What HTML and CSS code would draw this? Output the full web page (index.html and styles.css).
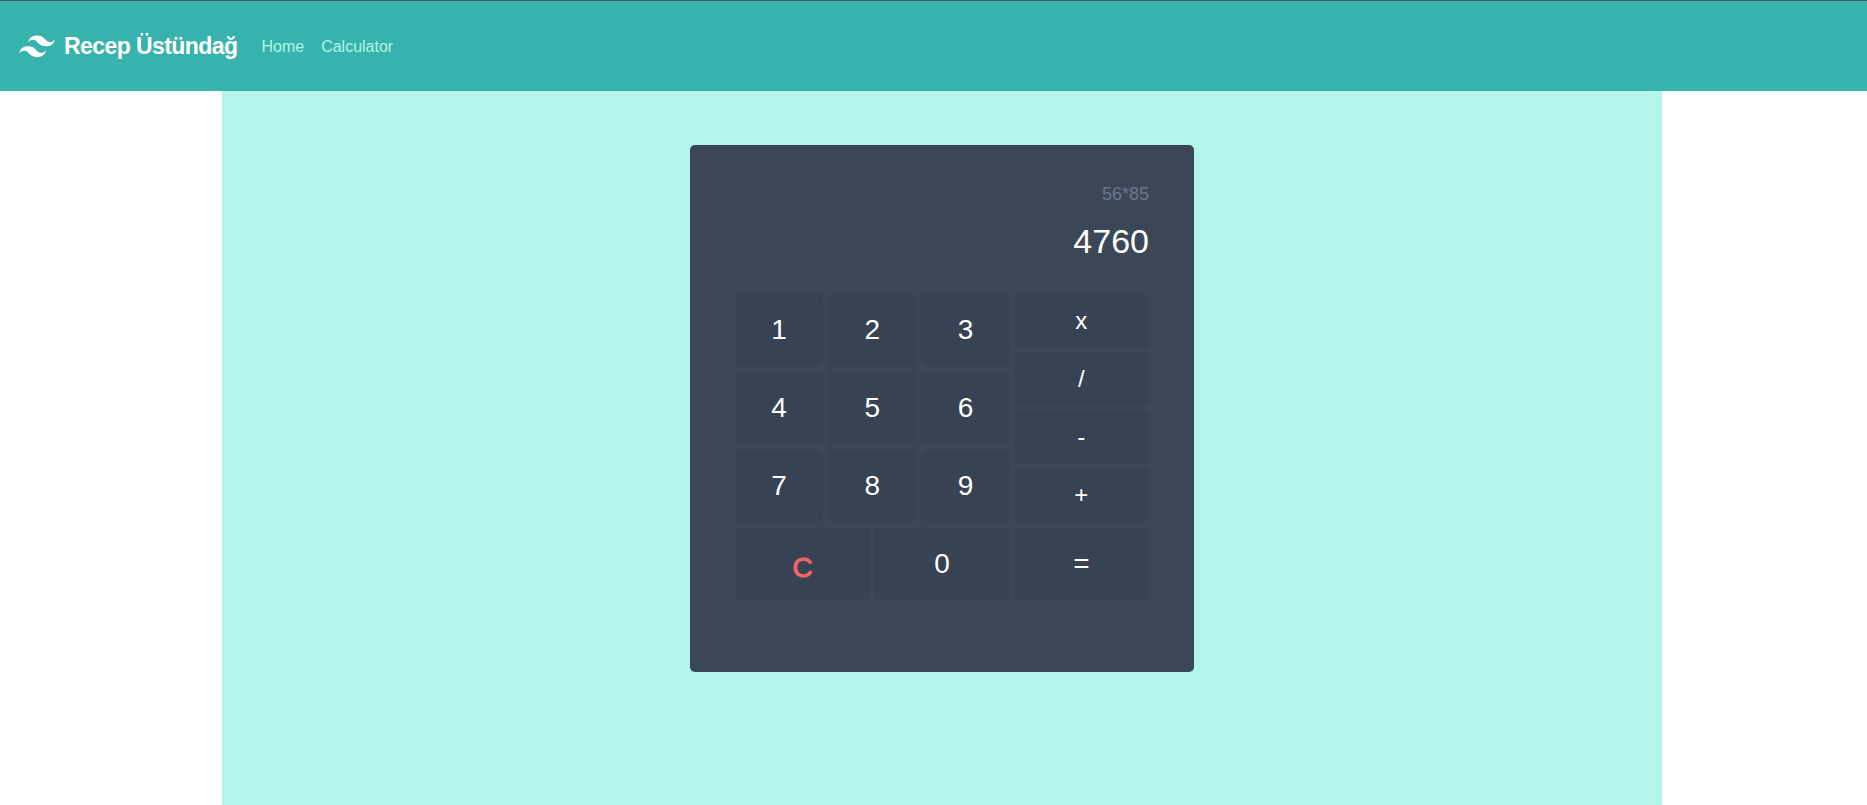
FILE: index.html
```html
<!DOCTYPE html>
<html lang="en">
<head>
<meta charset="utf-8">
<title>Calculator</title>
<link rel="stylesheet" href="styles.css">
</head>
<body>
<nav class="navbar">
  <div class="brand">
    <svg class="brand-logo" viewBox="0 0 54 54" aria-hidden="true"><path fill="currentColor" d="M13.5 22.1c1.8-7.2 6.3-10.8 13.5-10.8 10.8 0 12.15 8.1 17.55 9.45 3.6.9 6.75-.45 9.45-4.05-1.8 7.2-6.3 10.8-13.5 10.8-10.8 0-12.15-8.1-17.55-9.45-3.6-.9-6.75.45-9.45 4.05zM0 38.3c1.8-7.2 6.3-10.8 13.5-10.8 10.8 0 12.15 8.1 17.55 9.45 3.6.9 6.75-.45 9.45-4.05-1.8 7.2-6.3 10.8-13.5 10.8-10.8 0-12.15-8.1-17.55-9.45-3.6-.9-6.75.45-9.45 4.05z"/></svg>
    <span class="brand-name">Recep Üstündağ</span>
  </div>
  <a class="nav-link" href="#home">Home</a>
  <a class="nav-link" href="#calculator">Calculator</a>
</nav>
<main class="page">
  <section class="stage">
    <div class="calculator">
      <div class="display">
        <div class="expression">56*85</div>
        <output class="result">4760</output>
      </div>
      <div class="keypad">
        <div class="digits">
          <button class="key">1</button>
          <button class="key">2</button>
          <button class="key">3</button>
          <button class="key">4</button>
          <button class="key">5</button>
          <button class="key">6</button>
          <button class="key">7</button>
          <button class="key">8</button>
          <button class="key">9</button>
        </div>
        <div class="operators">
          <button class="key operator">x</button>
          <button class="key operator">/</button>
          <button class="key operator">-</button>
          <button class="key operator">+</button>
        </div>
        <button class="key clear">C</button>
        <button class="key">0</button>
        <button class="key">=</button>
      </div>
    </div>
  </section>
</main>
</body>
</html>
```
FILE: styles.css
```css
* { box-sizing: border-box; }
body {
  margin: 0;
  min-height: 100vh;
  display: flex;
  flex-direction: column;
  background: #fff;
  font-family: "Liberation Sans", Arial, sans-serif;
  line-height: 24px;
}
.navbar {
  display: flex;
  align-items: center;
  padding: 18px 19px;
  border-top: 1px solid #4a5568;
  background: #38b2ac;
}
.brand {
  display: flex;
  align-items: center;
  gap: 9px;
  margin-right: 24px;
  color: #fff;
}
.brand-logo { width: 36px; height: 54px; }
.brand-name {
  font-size: 23px;
  font-weight: 700;
  letter-spacing: -0.025em;
}
.nav-link {
  margin-right: 17px;
  padding-top: 2px;
  color: #b2f5ea;
  font-size: 16px;
  text-decoration: none;
}
.page {
  flex: 1;
  display: flex;
  justify-content: center;
  padding-left: 17px;
}
.stage {
  flex: 0 1 1440px;
  padding: 54px 0;
  background: #b2f5ea;
}
.calculator {
  width: 35%;
  min-width: 400px;
  margin: 0 auto;
  padding: 36px 45px 72px;
  border-radius: 5px;
  background: #3b4656;
  color: #fff;
}
.display {
  display: flex;
  flex-direction: column;
  align-items: flex-end;
  margin-bottom: 27px;
}
.expression {
  color: #667a8c;
  font-size: 18px;
  line-height: 27px;
}
.result {
  margin-top: 8px;
  font-size: 34px;
  line-height: 51px;
}
.keypad {
  display: grid;
  grid-template-columns: repeat(3, 1fr);
  gap: 6px 4px;
}
.digits {
  grid-column: span 2;
  display: grid;
  grid-template-columns: repeat(3, 1fr);
  gap: 6px 5px;
}
.operators { display: grid; gap: 4px; }
.key {
  min-height: 72px;
  padding: 0;
  border: 0;
  border-radius: 5px;
  background: #374252;
  color: inherit;
  font: inherit;
  font-size: 28px;
}
.operator { min-height: 54px; font-size: 24px; }
.clear {
  padding-top: 7px;
  color: #f56565;
  -webkit-text-stroke: 1px currentColor;
}
```
